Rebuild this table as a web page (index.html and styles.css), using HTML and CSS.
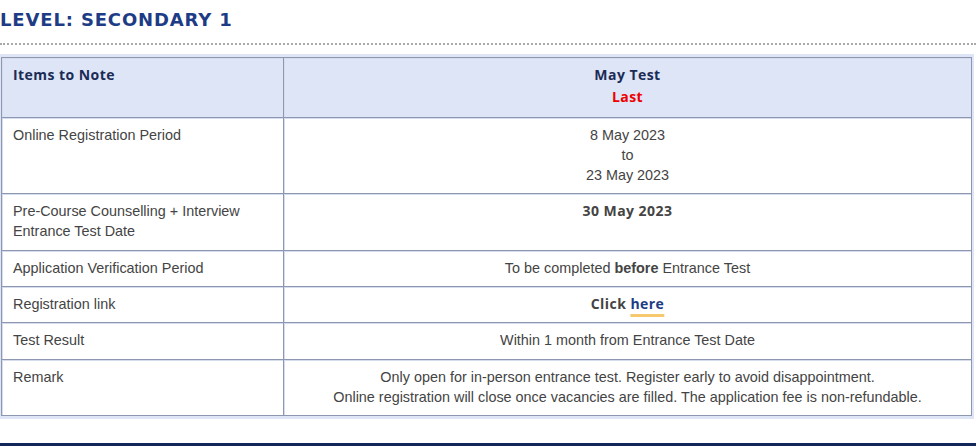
FILE: index.html
```html
<!DOCTYPE html>
<html lang="en">
<head>
<meta charset="utf-8">
<title>Level: Secondary 1</title>
<link rel="stylesheet" href="styles.css">
</head>
<body>
<div class="page">
  <h2 class="level">LEVEL: SECONDARY 1</h2>
  <div class="rule"></div>
  <div class="table-wrap">
    <table class="info">
      <colgroup>
        <col class="c-item">
        <col class="c-test">
      </colgroup>
      <thead>
        <tr>
          <th class="col-item">Items to Note</th>
          <th class="col-test">May Test<br><span class="last">Last</span></th>
        </tr>
      </thead>
      <tbody>
        <tr>
          <td class="col-item">Online Registration Period</td>
          <td class="col-test">8 May 2023<br>to<br>23 May 2023</td>
        </tr>
        <tr class="tall">
          <td class="col-item">Pre-Course Counselling + Interview<br>Entrance Test Date</td>
          <td class="col-test"><span class="strong">30 May 2023</span></td>
        </tr>
        <tr>
          <td class="col-item">Application Verification Period</td>
          <td class="col-test">To be completed <b>before</b> Entrance Test</td>
        </tr>
        <tr>
          <td class="col-item">Registration link</td>
          <td class="col-test"><span class="strong">Click <a class="here" href="#">here</a></span></td>
        </tr>
        <tr class="tall">
          <td class="col-item">Test Result</td>
          <td class="col-test">Within 1 month from Entrance Test Date</td>
        </tr>
        <tr class="last-row">
          <td class="col-item">Remark</td>
          <td class="col-test">Only open for in-person entrance test. Register early to avoid disappointment.<br>Online registration will close once vacancies are filled. The application fee is non-refundable.</td>
        </tr>
      </tbody>
    </table>
  </div>
  <div class="footer-bar"></div>
</div>
</body>
</html>
```

FILE: styles.css
```css
html, body {
  margin: 0;
  padding: 0;
  background: #ffffff;
}

body {
  font-family: "Liberation Sans", Arial, sans-serif;
  color: #444444;
  overflow: hidden;
}

.page {
  display: flex;
  flex-direction: column;
  height: 446px;
}

.level {
  margin: 0;
  padding: 9px 0 0 0;
  font-family: "DejaVu Sans", sans-serif;
  font-weight: bold;
  font-size: 18px;
  line-height: 22px;
  letter-spacing: 0.85px;
  color: #1d3c85;
}

.rule {
  margin-top: 12px;
  border-top: 2px dotted #a9a9a9;
}

.table-wrap {
  margin-top: 9px;
  width: 970px;
  padding: 3px 3px 3px 1px;
  background: #dde5f7;
}

.info {
  width: 971px;
  table-layout: fixed;
  border-collapse: separate;
  border-spacing: 0;
  background: #ffffff;
  font-size: 14.4px;
  line-height: 20px;
}

.c-item {
  width: 282px;
}

.info th,
.info td {
  border-top: 1px solid #8e97b0;
  border-left: 1px solid #8e97b0;
  box-shadow: inset 1px 1px 0 #d6ddee;
  vertical-align: top;
}

.info .col-test {
  border-right: 1px solid #8e97b0;
  text-align: center;
}

.info .col-item {
  text-align: left;
}

.info .last-row td {
  border-bottom: 1px solid #8e97b0;
}

.info th {
  background: #dde5f7;
  font-family: "Open Sans", sans-serif;
  font-weight: 700;
  font-size: 14px;
  line-height: 22px;
  letter-spacing: 0.45px;
  color: #1b2b55;
  padding: 6px 11px 9px 11px;
}

.info td {
  padding: 7px 11px 8px 11px;
}

.info .tall td {
  padding-bottom: 9px;
}

.last {
  color: #ee0000;
}

.strong {
  font-family: "Open Sans", sans-serif;
  font-size: 14px;
  font-weight: 700;
  letter-spacing: 0.45px;
  color: #444444;
}

.here {
  color: #1d3c85;
  text-decoration: underline;
  text-decoration-color: #f6c96f;
  text-decoration-thickness: 3px;
  text-underline-offset: 5px;
}

.footer-bar {
  margin-top: 24px;
  flex: 1;
  background: #13265a;
}
```
